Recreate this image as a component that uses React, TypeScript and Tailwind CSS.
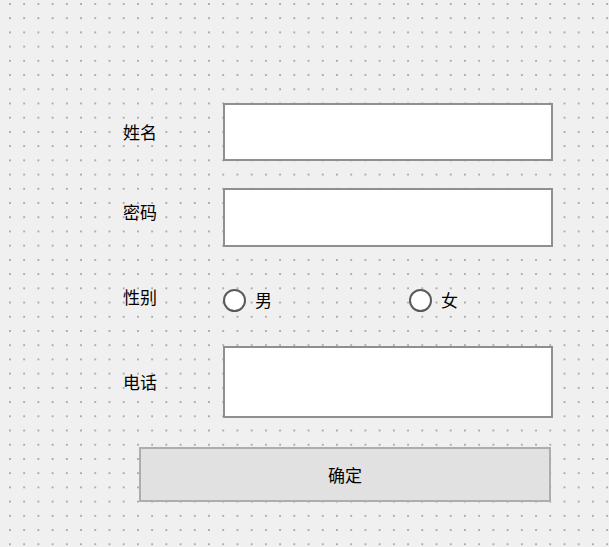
import React from "react";

const App = () => {
    return (
        <div className="w-[609px] h-[547px] bg-[#f0f0f0] bg-[radial-gradient(circle_at_1px_1px,#acacac_0.8px,transparent_1.1px)] bg-[length:14.22px_14.22px] bg-[position:9px_3px] font-['Noto_Sans_CJK_SC','Noto_Sans',sans-serif] text-[17px] text-black flex flex-col pt-[103px] pl-[123px]">
            {/* 姓名 */}
            <div className="flex h-[58px]">
                <div className="w-[100px] flex items-center">姓名</div>
                <div className="w-[330px] h-full bg-white border-2 border-[#8f8f8f]" />
            </div>

            {/* 密码 */}
            <div className="flex h-[59px] mt-[27px]">
                <div className="w-[100px] flex items-center pb-[11px]">密码</div>
                <div className="w-[330px] h-full bg-white border-2 border-[#8f8f8f]" />
            </div>

            {/* 性别 */}
            <div className="flex h-[28px] mt-[39px]">
                <div className="w-[100px] flex items-center pb-[6px]">性别</div>
                <div className="flex items-center">
                    <label className="w-[186px] flex items-center gap-[9px]">
                        <span className="w-[23px] h-[23px] rounded-full bg-white border-2 border-[#5a5a5a]" />
                        <span>男</span>
                    </label>
                    <label className="flex items-center gap-[9px]">
                        <span className="w-[23px] h-[23px] rounded-full bg-white border-2 border-[#5a5a5a]" />
                        <span>女</span>
                    </label>
                </div>
            </div>

            {/* 电话 */}
            <div className="flex h-[72px] mt-[32px]">
                <div className="w-[100px] flex items-center">电话</div>
                <div className="w-[330px] h-full bg-white border-2 border-[#8f8f8f]" />
            </div>

            <button className="mt-[29px] ml-[16px] w-[412px] h-[55px] bg-[#e1e1e1] border-2 border-[#adadad] flex items-center justify-center">
                确定
            </button>
        </div>
    );
};

export default App;
